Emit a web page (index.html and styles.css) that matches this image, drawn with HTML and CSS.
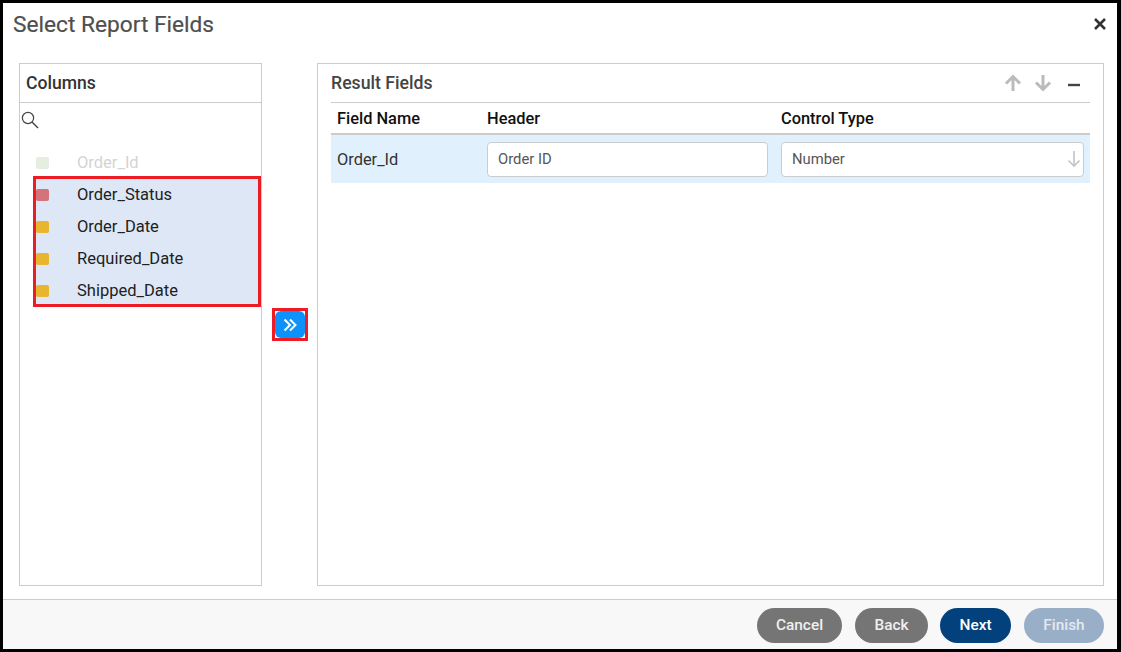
FILE: index.html
```html
<!DOCTYPE html>
<html lang="en">
<head>
<meta charset="utf-8">
<title>Select Report Fields</title>
<link rel="stylesheet" href="styles.css">
</head>
<body>
<div class="dialog">
  <header class="title-bar">
    <h1 class="title">Select Report Fields</h1>
    <svg class="close" width="14" height="14" viewBox="0 0 14 14"><path d="M2 2l10 10M12 2L2 12" stroke="#333" stroke-width="2.6" fill="none"/></svg>
  </header>
  <main class="body">
    <section class="panel columns">
      <h2 class="columns-head">Columns</h2>
      <div class="search">
        <svg width="18" height="18" viewBox="0 0 18 18"><circle cx="7" cy="7" r="5.6" stroke="#444" stroke-width="1.2" fill="none"/><path d="M11 11l6 6" stroke="#444" stroke-width="1.4" fill="none"/></svg>
      </div>
      <ul class="list">
        <li class="row row-off"><span class="swatch sw-off"></span><span>Order_Id</span></li>
      </ul>
      <ul class="list selected">
        <li class="row"><span class="swatch sw-red"></span><span>Order_Status</span></li>
        <li class="row"><span class="swatch sw-yel"></span><span>Order_Date</span></li>
        <li class="row"><span class="swatch sw-yel"></span><span>Required_Date</span></li>
        <li class="row"><span class="swatch sw-yel"></span><span>Shipped_Date</span></li>
      </ul>
    </section>
    <div class="mover">
      <div class="mover-frame">
        <button class="mover-btn" type="button">
          <svg width="16" height="14" viewBox="0 0 16 14"><path d="M2.500 1.500L8 7l-5.500 5.500M8 1.500L13.500 7 8 12.500" stroke="#fff" stroke-width="2" fill="none"/></svg>
        </button>
      </div>
    </div>
    <section class="panel result">
      <div class="result-head">
        <h2 class="result-title">Result Fields</h2>
        <div class="tools">
          <svg width="18" height="18" viewBox="0 0 18 18"><path d="M9 17V3M2 9.500L9 2.500 16 9.500" stroke="#bbb" stroke-width="3" fill="none"/></svg>
          <svg width="18" height="18" viewBox="0 0 18 18"><path d="M9 1v14M2 8.500L9 15.500 16 8.500" stroke="#bbb" stroke-width="3" fill="none"/></svg>
          <svg class="minus" width="14" height="18" viewBox="0 0 14 18"><path d="M1 11h12" stroke="#444" stroke-width="2.400"/></svg>
        </div>
      </div>
      <div class="grid grid-head">
        <span>Field Name</span><span>Header</span><span>Control Type</span>
      </div>
      <div class="grid grid-row">
        <span class="field-name">Order_Id</span>
        <div class="input">Order ID</div>
        <div class="input select">Number
          <svg width="14" height="18" viewBox="0 0 14 18"><path d="M7 1v15M1.500 10.500L7 16l5.500-5.500" stroke="#c4c4c4" stroke-width="1.600" fill="none"/></svg>
        </div>
      </div>
    </section>
  </main>
  <footer class="footer">
    <button class="btn btn-grey w-cancel" type="button">Cancel</button>
    <button class="btn btn-grey w-back" type="button">Back</button>
    <button class="btn btn-navy w-next" type="button">Next</button>
    <button class="btn btn-off w-finish" type="button">Finish</button>
  </footer>
</div>
</body>
</html>
```
FILE: styles.css
```css
* { box-sizing: border-box; }
html, body { margin: 0; padding: 0; }
body { width: 1121px; height: 652px; font-family: Roboto, "Liberation Sans", sans-serif; overflow: hidden; }

.dialog {
  width: 1121px; height: 652px;
  border: solid #000; border-width: 3px 4px 3px 3px;
  background: #fff;
  display: flex; flex-direction: column;
}
.title-bar {
  height: 60px; flex: none;
  display: flex; justify-content: space-between; align-items: flex-start;
  padding: 9px 10px 0 10px;
}
.title { margin: 0; font-size: 22.700px; line-height: 26px; font-weight: 400; color: #4f4f4f; -webkit-text-stroke: 0.2px #4f4f4f; }
.close { margin-top: 5px; }

.body { flex: none; height: 536px; display: flex; padding: 0 13px 13px 16px; }
.panel { border: 1px solid #ccc; height: 523px; }
.columns { width: 243px; flex: none; }
.columns-head {
  margin: 0; height: 39px; padding: 0 6px; border-bottom: 1px solid #ccc;
  font-size: 17.600px; font-weight: 500; line-height: 38px; color: #333;
}
.search { height: 43px; padding: 8px 0 0 1px; }
.search svg { display: block; }
.list { list-style: none; margin: 0; padding: 0; }
.row { height: 32px; flex: none; display: flex; align-items: center; padding-left: 16px; font-size: 16.500px; color: #212121; }
.row-off { color: #d4d4d4; }
.swatch { width: 13px; height: 12px; border-radius: 2px; margin: 1px 28px 0 0; flex: none; }
.sw-off { background: #e6eee1; }
.sw-red { background: #d4737a; }
.sw-yel { background: #e8b530; }
.selected { margin: -2px 0 0 13px; width: 228px; height: 131px; border: 3px solid #ed1c24; background: #dee7f5; }
.selected .row { padding-left: 0; }
.selected .row:first-child { margin-top: -1px; }

.mover { width: 55px; flex: none; }
.mover-frame {
  margin: 245px 0 0 10px; width: 36px; height: 33px;
  border: 3px solid #ed1c24; background: #fff;
}
.mover-btn {
  display: flex; align-items: center; justify-content: center;
  width: 30px; height: 27px; padding: 0; border: 0; border-radius: 6px; background: #0d92fb;
}

.result { width: 787px; flex: none; padding: 0 13px; }
.result-head {
  height: 39px; border-bottom: 1px solid #ccc;
  display: flex; justify-content: space-between; align-items: center;
}
.result-title { margin: 0; font-size: 17.700px; font-weight: 500; color: #444; }
.tools { display: flex; align-items: center; gap: 12px; padding-right: 10px; }
.tools svg { display: block; }
.minus { margin-left: 3px; margin-right: -1px; }
.grid { display: grid; grid-template-columns: 150px 294px 303px; padding: 0 6px; }
.grid-head {
  height: 32px; border-bottom: 2px solid #ccc; align-items: center;
  font-size: 16.400px; font-weight: 500; color: #111;
}
.grid-row { height: 48px; background: #e0f0fd; align-items: center; font-size: 16.400px; color: #333; }
.input {
  height: 35px; border: 1px solid #ccc; border-radius: 4px; background: #fff;
  display: flex; align-items: center; justify-content: space-between;
  padding: 0 2px 0 10px; font-size: 14.800px; color: #555;
  width: 281px;
}
.select { width: 303px; }

.footer {
  flex: 1; border-top: 1px solid #ccc; background: #f8f8f8;
  display: flex; justify-content: flex-end; align-items: flex-start;
  padding: 8px 13px 0 0;
}
.btn { height: 35px; border: 0; border-radius: 18px; padding: 0 0 2px; color: #fff; font: 500 15.400px Roboto, "Liberation Sans", sans-serif; }
.btn-grey { background: #757575; color: #f0f0f0; }
.btn-navy { background: #03417d; }
.btn-off { background: #99afc8; color: #e4e9ef; }
.w-cancel { width: 85px; margin-right: 13px; }
.w-back { width: 73px; margin-right: 12px; }
.w-next { width: 71px; margin-right: 13px; }
.w-finish { width: 80px; }
```
